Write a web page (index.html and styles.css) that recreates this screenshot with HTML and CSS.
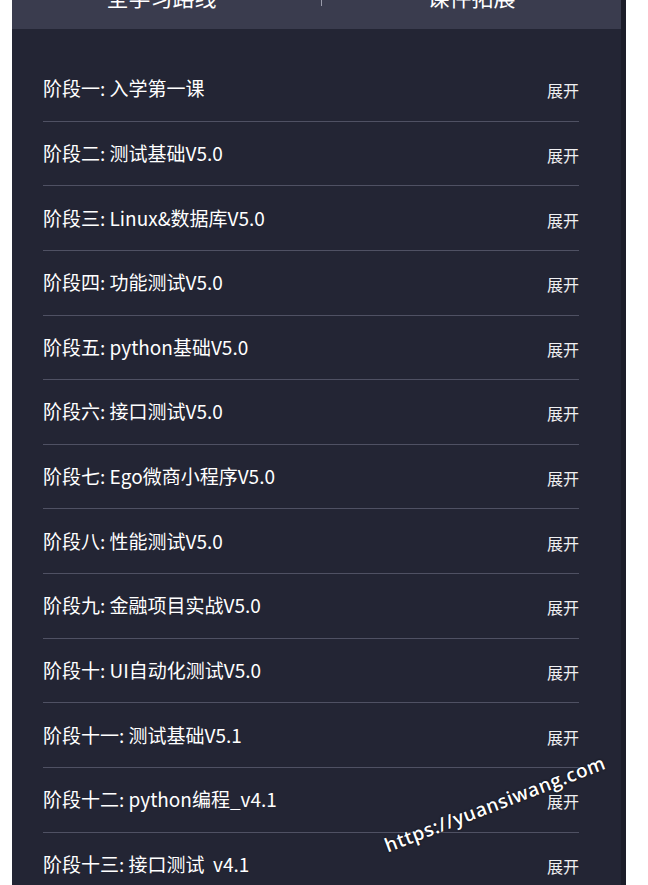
FILE: index.html
```html
<!DOCTYPE html>
<html lang="zh-CN">
<head>
    <meta charset="UTF-8">
    <meta name="viewport" content="width=device-width, initial-scale=1.0">
    <title>课程目录</title>
    <link rel="stylesheet" href="styles.css">
</head>
<body>
    <div class="wrap">
        <div class="panel">
            <!-- 顶部标签 -->
            <div class="tabs">
                <div class="tab">全学习路线</div>
                <div class="tab-sep"></div>
                <div class="tab">课件拓展</div>
            </div>

            <!-- 阶段列表 -->
            <ul class="stage-list">
                <li class="stage"><span class="stage-name">阶段一: 入学第一课</span><span class="toggle">展开</span></li>
                <li class="stage"><span class="stage-name">阶段二: 测试基础V5.0</span><span class="toggle">展开</span></li>
                <li class="stage"><span class="stage-name">阶段三: Linux&amp;数据库V5.0</span><span class="toggle">展开</span></li>
                <li class="stage"><span class="stage-name">阶段四: 功能测试V5.0</span><span class="toggle">展开</span></li>
                <li class="stage"><span class="stage-name">阶段五: python基础V5.0</span><span class="toggle">展开</span></li>
                <li class="stage"><span class="stage-name">阶段六: 接口测试V5.0</span><span class="toggle">展开</span></li>
                <li class="stage"><span class="stage-name">阶段七: Ego微商小程序V5.0</span><span class="toggle">展开</span></li>
                <li class="stage"><span class="stage-name">阶段八: 性能测试V5.0</span><span class="toggle">展开</span></li>
                <li class="stage"><span class="stage-name">阶段九: 金融项目实战V5.0</span><span class="toggle">展开</span></li>
                <li class="stage"><span class="stage-name">阶段十: UI自动化测试V5.0</span><span class="toggle">展开</span></li>
                <li class="stage"><span class="stage-name">阶段十一: 测试基础V5.1</span><span class="toggle">展开</span></li>
                <li class="stage"><span class="stage-name">阶段十二: python编程_v4.1</span><span class="toggle">展开</span></li>
                <li class="stage"><span class="stage-name">阶段十三: 接口测试&nbsp;&nbsp;v4.1</span><span class="toggle">展开</span></li>
                <li class="stage"><span class="stage-name">阶段十四: 性能测试v4.1</span><span class="toggle">展开</span></li>
            </ul>
        </div>
        <div class="scroll-strip"></div>
    </div>

    <!-- 水印 -->
    <div class="watermark">https://yuansiwang.com</div>
</body>
</html>
```

FILE: styles.css
```css
/* 基本设置 */
body {
    margin: 0;
    background-color: #fff;
    font-family: "Microsoft YaHei", "Noto Sans CJK SC", "Noto Sans", sans-serif;
    color: #fff;
    overflow: hidden;
}

.wrap {
    display: flex;
    margin-left: 12px;
    height: 885px;
}

.panel {
    width: 609px;
    background-color: #232534;
    margin-top: -31px;
}

.scroll-strip {
    width: 5px;
    background-color: #1c1d29;
}

/* 标签栏 */
.tabs {
    height: 60px;
    box-sizing: border-box;
    padding-bottom: 6px;
    display: flex;
    align-items: center;
    background-color: #3a3c4e;
}

.tab {
    flex: 1;
    text-align: center;
    font-size: 22px;
    line-height: 30px;
}

.tab:first-child {
    padding-right: 10px;
}

.tab-sep {
    width: 1px;
    height: 20px;
    background-color: #9a9cab;
}

/* 阶段列表 */
.stage-list {
    list-style: none;
    margin: 0;
    padding: 28px 42px 0 31px;
}

.stage {
    height: 63.64px;
    border-bottom: 1px solid #4f5163;
    display: flex;
    justify-content: space-between;
    align-items: center;
}

.stage-name {
    font-size: 19px;
    margin-top: -2px;
}

.toggle {
    font-size: 16px;
    margin-top: 3px;
    color: #f0f0f2;
}

/* 水印 */
.watermark {
    position: absolute;
    left: 390px;
    top: 832px;
    font-family: "Open Sans", "Noto Sans", sans-serif;
    font-size: 19px;
    font-weight: 600;
    letter-spacing: 0.6px;
    color: #fff;
    text-shadow: 0 0 2px #000;
    transform: rotate(-21deg);
    transform-origin: left bottom;
}
```
